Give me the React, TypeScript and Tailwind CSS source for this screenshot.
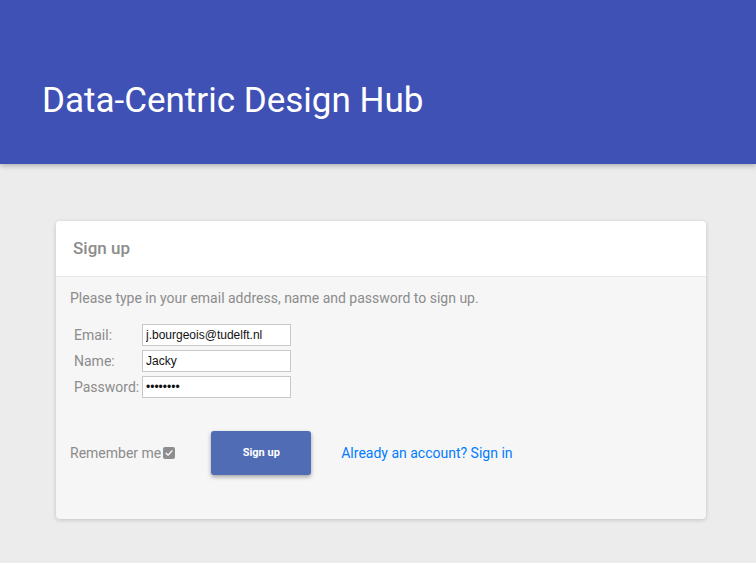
import React from "react";

const font = "font-['Roboto','Liberation_Sans',sans-serif]";

const Field = ({ label, value, type = "text" }: { label: string; value: string; type?: string }) => (
    <div className="flex items-center h-[22px]">
        <label className="w-[68px] text-[14px] text-[#8c8c8c] leading-none">{label}</label>
        <input
            type={type}
            defaultValue={value}
            className="w-[149px] h-[22px] border border-[#c8c8c8] bg-white px-[3px] text-[12px] text-[#111] font-['Liberation_Sans',Arial,sans-serif] outline-none"
        />
    </div>
);

const App = () => {
    return (
        <div className={`min-h-[563px] bg-[#ececec] ${font}`}>
            {/* Header */}
            <div className="h-[164px] bg-[#3f51b5] pl-[42px] pt-[81px] shadow-[0_2px_5px_rgba(0,0,0,0.25)] relative">
                <h1 className="text-white text-[35px] leading-[40px] font-normal">Data-Centric Design Hub</h1>
            </div>

            {/* Card */}
            <div className="ml-[56px] mt-[57px] w-[650px] rounded-[4px] overflow-hidden bg-[#f6f6f6] shadow-[0_1px_4px_rgba(0,0,0,0.18)]">
                <div className="h-[56px] bg-white border-b border-[#e8e8e8] pl-[17px] flex items-center">
                    <h2 className="text-[17px] font-medium text-[#8c8c8c]">Sign up</h2>
                </div>
                <div className="px-[14px] pt-[11px] pb-[44px]">
                    <p className="text-[14px] leading-[20px] text-[#8c8c8c]">
                        Please type in your email address, name and password to sign up.
                    </p>
                    <div className="mt-[16px] pl-[4px] flex flex-col gap-[4px]">
                        <Field label="Email:" value="j.bourgeois@tudelft.nl" />
                        <Field label="Name:" value="Jacky" />
                        <Field label="Password:" value="ssssssss" type="password" />
                    </div>
                    <div className="mt-[33px] flex items-center">
                        <span className="text-[14px] text-[#8c8c8c]">Remember me</span>
                        <span className="ml-[2px] w-[12px] h-[12px] rounded-[2px] bg-[#8e8e8e] flex items-center justify-center">
                            <svg viewBox="0 0 12 12" className="w-[10px] h-[10px]">
                                <path d="M2.5 6.2 L5 8.6 L9.5 3.4" fill="none" stroke="white" strokeWidth="1.6" strokeLinecap="round" strokeLinejoin="round" />
                            </svg>
                        </span>
                        <button className="ml-[36px] w-[100px] h-[44px] rounded-[3px] bg-[#4f6cb4] text-white text-[11px] font-bold shadow-[0_2px_4px_rgba(0,0,0,0.35)]">
                            Sign up
                        </button>
                        <a href="#" className="ml-[30px] text-[14px] text-[#007bff]">
                            Already an account? Sign in
                        </a>
                    </div>
                </div>
            </div>
        </div>
    );
};

export default App;
